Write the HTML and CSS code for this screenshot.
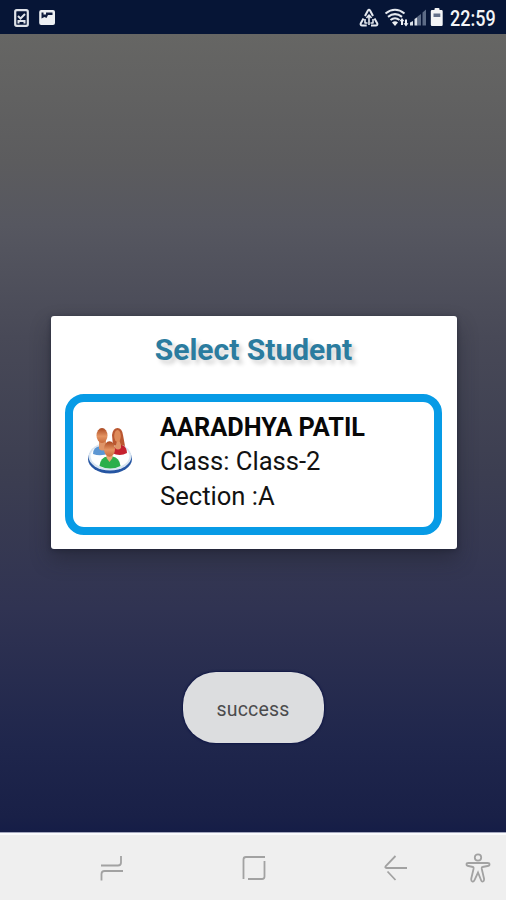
FILE: index.html
```html
<!DOCTYPE html>
<html lang="en">
<head>
<meta charset="utf-8">
<title>Select Student</title>
<link rel="stylesheet" href="styles.css">
</head>
<body>
<header class="status">
  <svg class="status-left" width="42" height="18" viewBox="0 0 42 18">
    <rect x="1.2" y="1.2" width="12.6" height="15.6" rx="1.5" fill="none" stroke="#dfe3e9" stroke-width="2.2"/>
    <path d="M4 7l2.500 2.500L11 5M4.500 14.500V12h6v2.500" fill="none" stroke="#dfe3e9" stroke-width="2"/>
    <rect x="25.200" y="1" width="15.800" height="15" rx="2" fill="#edf0f3"/>
    <path d="M27.500 3.500h2v2h2.500v-2h6.500V6H34l-1.500 3-2-1-3 1.500z" fill="#101d3e"/>
  </svg>
  <div class="status-right">
    <svg width="84" height="22" viewBox="0 0 84 22">
      <g fill="none" stroke="#e5e9ef" stroke-width="2" stroke-linejoin="round">
        <path d="M6 9l2.800-5.300q1.200-1.800 2.400 0L14 9M4.500 11.500l-2.800 5q-.5 2 1.500 2h4.500M15.500 11.500l2.800 5q.5 2-1.500 2H12"/>
        <path d="M10 18V8M7.500 11L10 8l2.500 3M6 12v4h2.500M14 12v4h-2.500" stroke-width="1.600"/>
        <path d="M26.500 6.500q9.500-7.500 19 0M29 9.800q7-5.300 14 0M31.500 13q4.500-3.500 9 0" stroke-width="2.100"/>
      </g>
      <path d="M33 15.500q3-2.400 6 0L36 19z" fill="#edf0f4"/>
      <path d="M43 11l2.500 3.300h-1.500V18h-2v-3.700h-1.500zM47 19.500l-2.500-3.300H46V12.500h2v3.700h1.500z" fill="#edf0f4"/>
      <path d="M51 18.500v-3l3-1.500v4.500zM55.500 18.500V12l3-2v8.500z" fill="#dce1e8"/>
      <path d="M58.500 18.500V9.500l3.500-2.500v11.500zM63.500 18.500V5.500L67 2.500v16z" fill="#5c6b86"/>
      <path d="M75.500 2q0-1 1-1h3q1 0 1 1v1h2q1.200 0 1.200 1.200v13.600q0 1.200-1.200 1.200h-9.500q-1.200 0-1.200-1.200V4.200Q71.800 3 73 3h2.500z" fill="#f4f5f6"/>
      <path d="M74.500 6.500h6.800V10h-6.800z" fill="#65718a"/>
    </svg>
    <span class="clock">22:59</span>
  </div>
</header>
<main class="screen">
  <section class="dialog">
    <h1 class="title">Select Student</h1>
    <div class="student">
      <svg class="avatar" width="46" height="50" viewBox="0 0 46 50">
        <defs>
          <linearGradient id="skin" x2="0" y2="1"><stop offset="0" stop-color="#a94720"/><stop offset=".55" stop-color="#e49462"/><stop offset="1" stop-color="#c96b3d"/></linearGradient>
        </defs>
        <ellipse cx="23" cy="32" rx="22" ry="14.500" fill="#2555a2"/>
        <ellipse cx="23" cy="29.500" rx="21.500" ry="14" fill="#d7e4f1"/>
        <ellipse cx="23" cy="29" rx="19.500" ry="12.500" fill="#fdfefe"/>
        <path d="M6 27q0-7 7-8h4q4 1 5 7-8 4-16 1z" fill="#5c96d2"/>
        <path d="M25 26q1-7 6-8h4q5 2 5 8-7 4-15 0z" fill="#c5202e"/>
        <path d="M12 13h7v9q-3 3-7 0zM28 13h6v8q-3 3-6 0z" fill="#df9568"/>
        <ellipse cx="15" cy="8.500" rx="5.500" ry="7.500" fill="url(#skin)"/>
        <path d="M26 19L25 8q1-7 5.500-7T36 8l2 11-4-1-3-8-2 8z" fill="#ba5730"/>
        <ellipse cx="30.500" cy="9" rx="3.300" ry="6" fill="#de8a59"/>
        <path d="M12.500 39q1-9 8-9.500h5q7 1 8 9.500-10 5-21 0z" fill="#2caf4b"/>
        <path d="M19.500 26h6v5l-3 4-3-4z" fill="#eda777"/>
        <ellipse cx="22.500" cy="22" rx="5.500" ry="7.800" fill="url(#skin)"/>
      </svg>
      <div class="details">
        <strong class="name">AARADHYA PATIL</strong>
        <span>Class: Class-2</span>
        <span>Section :A</span>
      </div>
    </div>
  </section>
  <div class="toast">success</div>
</main>
<nav class="nav">
  <svg width="26" height="30" viewBox="0 0 26 30"><path d="M2 12.500h17q3 0 3-3V3M24 18H5.500q-3 0-3 3v6.500"/></svg>
  <svg width="26" height="30" viewBox="0 0 26 30"><path d="M2.500 26V6.500q0-2.500 2.500-2.500h19M23.500 8v15.500q0 2.500-2.500 2.500H7"/></svg>
  <svg width="26" height="30" viewBox="0 0 26 30"><path d="M12.500 3L2.800 13Q1.500 15 3.500 15H24M4.500 18.500l8 8.500"/></svg>
  <svg width="26" height="30" viewBox="0 0 26 30"><circle cx="13" cy="4.500" r="3.200"/><path d="M3.500 10h19q2 0 2 1.500T22.500 13l-5 1q-1 0-.7 2l2.200 9.500q.4 2.500-1 3t-2-1.500L13 19.500 9.500 27q-.8 2-2.200 1.500t-1-3L8.500 16q.3-2-.5-2l-4.500-1q-2 0-2-1.500t2-1.500z"/></svg>
</nav>
</body>
</html>
```

FILE: styles.css
```css
* {
  box-sizing: border-box;
}

body {
  margin: 0;
  height: 900px;
  display: flex;
  flex-direction: column;
  font-family: Roboto, "Liberation Sans", sans-serif;
  overflow: hidden;
}

.status {
  height: 34px;
  display: flex;
  justify-content: space-between;
  align-items: center;
  padding: 1px 10px 0 14px;
  background: #061536;
}

.status-right {
  display: flex;
  align-items: center;
  gap: 7px;
}

.clock {
  width: 46px;
  padding-top: 1px;
  color: #f4f5f7;
  font-size: 22.5px;
  font-weight: 500;
  line-height: 33px;
  white-space: nowrap;
  transform: scaleX(.8);
  transform-origin: left center;
}

.screen {
  height: 798px;
  display: flex;
  flex-direction: column;
  align-items: center;
  background: linear-gradient(#666664 0%, #5c5c5e 16%, #565760 24%, #484957 38%, #3c3e51 55%, #303352 72%, #1f264c 89%, #192047 98%, #151d47 100%);
}

.dialog {
  width: 406px;
  height: 233px;
  margin: 282px 0 0 1px;
  padding: 14px 14.5px 14px;
  border-radius: 3px;
  background: #fff;
  box-shadow: 0 10px 20px rgba(28, 30, 42, .45), 0 1px 4px rgba(20, 25, 45, .5);
}

.title {
  height: 40px;
  margin: 0 0 24px;
  color: #2b7c9f;
  font-size: 30px;
  font-weight: 700;
  line-height: 40px;
  text-align: center;
  text-shadow: 4px 4px 4px rgba(0, 0, 0, .17);
}

.student {
  height: 141px;
  display: flex;
  border: 8px solid #079be6;
  border-radius: 19px;
  padding: 7px 0 0 14px;
}

.avatar {
  margin-top: 18px;
}

.details {
  display: flex;
  flex-direction: column;
  margin-left: 27px;
  color: #121212;
  font-size: 25.6px;
  line-height: 35px;
  white-space: nowrap;
}

.name {
  padding-top: 1px;
  height: 35px;
  font-size: 25.3px;
  font-weight: 700;
  color: #080808;
}

.toast {
  width: 141px;
  height: 71px;
  margin-top: 123px;
  border-radius: 33px;
  background: #dcdddf;
  box-shadow: 0 0 2px 1px #101746;
  color: #4b4b4d;
  font-size: 19.5px;
  line-height: 75px;
  letter-spacing: .2px;
  text-align: center;
}

.nav {
  height: 68px;
  display: grid;
  grid-template-columns: 26px 26px 26px 26px;
  column-gap: 116px;
  padding: 20px 0 0 99px;
  border-top: 1px solid #a4a8be;
  background: #efefef;
  box-shadow: inset 0 2px #fafbfd;
}

.nav svg {
  fill: none;
  stroke: #a2a2a2;
  stroke-width: 1.8;
}

.nav svg:last-child {
  margin-left: -60px;
}
```
